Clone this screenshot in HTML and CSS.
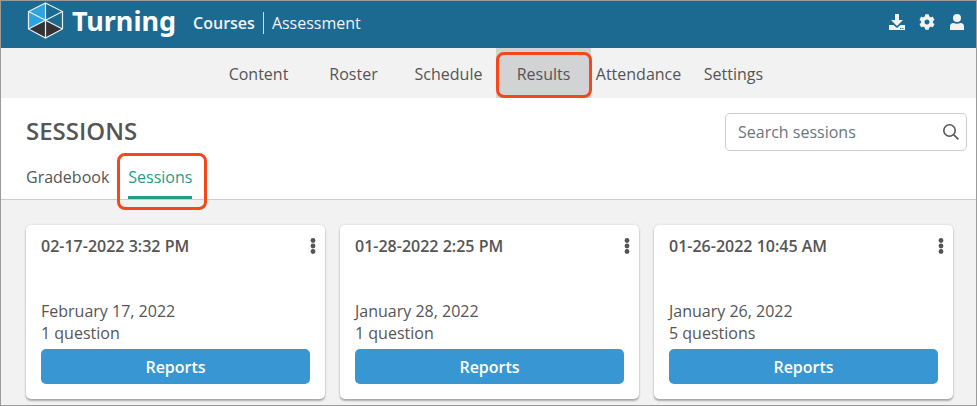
FILE: index.html
```html
<!DOCTYPE html>
<html lang="en">
<head>
  <meta charset="UTF-8" />
  <meta name="viewport" content="width=device-width, initial-scale=1.0" />
  <title>Turning - Sessions</title>
  <link rel="stylesheet" href="styles.css">
</head>
<body>
  <header class="topbar">
    <a class="brand" href="#">
      <svg class="logo" viewBox="0 0 36 37" aria-hidden="true">
        <path d="M18 1L1 9.5V27L18 18.5Z" fill="#2ea3dd"/>
        <path d="M18 18.5L1 27L18 36L35 27Z" fill="#333"/>
        <path d="M18 1L35 9.5V27L18 36L1 27V9.5ZM18 1V36M1 9.5L35 27M35 9.5L1 27" fill="none" stroke="#e8eef2" stroke-width="1.2"/>
      </svg>
      <span class="brand-name">Turning</span>
    </a>
    <nav class="modes">
      <a class="mode active" href="#">Courses</a>
      <a class="mode" href="#">Assessment</a>
    </nav>
    <div class="tools">
      <button class="tool" aria-label="Downloads">
        <svg viewBox="0 0 16 16"><path d="M6 0h4v6h4L8 12L2 6h4zM0 11h4.500l3.500 3l3.500-3H16v5H0z"/><path d="M11 14h1.200v1H11zM13.200 14h1.200v1h-1.200z" fill="#1c6a91"/></svg>
      </button>
      <button class="tool" aria-label="Settings">
        <svg viewBox="0 0 512 512"><path d="M487.400 315.700l-42.600-24.600c4.300-23.200 4.300-47 0-70.200l42.600-24.600c4.900-2.800 7.100-8.600 5.500-14-11.100-35.600-30-67.800-54.700-94.600-3.800-4.100-10-5.100-14.800-2.300L380.800 110c-17.900-15.400-38.500-27.300-60.800-35.100V25.800c0-5.600-3.900-10.500-9.400-11.700-36.700-8.200-74.300-7.800-109.200 0-5.500 1.200-9.400 6.100-9.400 11.700V75c-22.200 7.900-42.800 19.800-60.800 35.100L88.700 85.500c-4.900-2.800-11-1.900-14.800 2.300-24.700 26.700-43.600 58.900-54.700 94.600-1.700 5.400.6 11.200 5.500 14L67.300 221c-4.300 23.200-4.300 47 0 70.200l-42.600 24.600c-4.900 2.800-7.100 8.600-5.500 14 11.100 35.600 30 67.800 54.700 94.600 3.800 4.100 10 5.100 14.800 2.300l42.600-24.600c17.900 15.400 38.500 27.300 60.800 35.100v49.200c0 5.600 3.900 10.500 9.400 11.700 36.700 8.200 74.300 7.800 109.200 0 5.500-1.200 9.400-6.100 9.400-11.700v-49.200c22.200-7.900 42.800-19.800 60.800-35.100l42.600 24.600c4.900 2.800 11 1.900 14.800-2.300 24.700-26.700 43.600-58.900 54.700-94.600 1.500-5.500-.7-11.300-5.600-14.100zM256 336c-44.100 0-80-35.900-80-80s35.900-80 80-80 80 35.900 80 80-35.900 80-80 80z"/></svg>
      </button>
      <button class="tool" aria-label="Account">
        <svg viewBox="0 0 16 16"><circle cx="8" cy="4" r="4"/><path d="M1 16v-3.500Q1 9 4.500 9Q8 10.500 11.500 9Q15 9 15 12.500V16z"/></svg>
      </button>
    </div>
  </header>

  <nav class="course-nav">
    <a href="#">Content</a>
    <a href="#">Roster</a>
    <a href="#">Schedule</a>
    <a class="active" href="#">Results</a>
    <a href="#">Attendance</a>
    <a href="#">Settings</a>
  </nav>

  <section class="page-head">
    <div class="title-row">
      <h1>SESSIONS</h1>
      <div class="search">
        <input type="text" placeholder="Search sessions" aria-label="Search sessions">
        <svg viewBox="0 0 16 16" aria-hidden="true"><circle cx="6.500" cy="6.500" r="5.700"/><path d="M10.700 10.700L15.400 15.400"/></svg>
      </div>
    </div>
    <nav class="tabs">
      <a href="#">Gradebook</a>
      <a class="active" href="#">Sessions</a>
    </nav>
  </section>

  <main class="cards">
    <article class="card">
      <div class="card-head">
        <h2>02-17-2022 3:32 PM</h2>
        <button class="menu" aria-label="More options"><svg viewBox="0 0 6 16"><circle cx="3" cy="2.500" r="2.400"/><circle cx="3" cy="8" r="2.400"/><circle cx="3" cy="13.500" r="2.400"/></svg></button>
      </div>
      <p>February 17, 2022</p>
      <p>1 question</p>
      <button class="reports">Reports</button>
    </article>
    <article class="card">
      <div class="card-head">
        <h2>01-28-2022 2:25 PM</h2>
        <button class="menu" aria-label="More options"><svg viewBox="0 0 6 16"><circle cx="3" cy="2.500" r="2.400"/><circle cx="3" cy="8" r="2.400"/><circle cx="3" cy="13.500" r="2.400"/></svg></button>
      </div>
      <p>January 28, 2022</p>
      <p>1 question</p>
      <button class="reports">Reports</button>
    </article>
    <article class="card">
      <div class="card-head">
        <h2>01-26-2022 10:45 AM</h2>
        <button class="menu" aria-label="More options"><svg viewBox="0 0 6 16"><circle cx="3" cy="2.500" r="2.400"/><circle cx="3" cy="8" r="2.400"/><circle cx="3" cy="13.500" r="2.400"/></svg></button>
      </div>
      <p>January 26, 2022</p>
      <p>5 questions</p>
      <button class="reports">Reports</button>
    </article>
  </main>
</body>
</html>
```

FILE: styles.css
```css
:root {
  --header: #1c6a91;
  --bg: #f2f2f2;
  --text: #555555;
  --accent: #1f9c8a;
  --button: #3896d3;
  --highlight: #f4481c;
  --border: #cccccc;
}

* {
  box-sizing: border-box;
}

body {
  margin: 0;
  min-height: 100vh;
  border: 1px solid #9b9b9b;
  background-color: var(--bg);
  color: var(--text);
  font-family: 'Open Sans', 'Noto Sans', sans-serif;
  font-size: 16px;
  line-height: 22px;
}

a {
  color: inherit;
  text-decoration: none;
}

button {
  border: none;
  background: none;
  padding: 0;
  font: inherit;
  color: inherit;
  cursor: pointer;
}

svg {
  display: block;
}

h1, h2, p {
  margin: 0;
}

/* Top bar */
.topbar {
  display: flex;
  align-items: flex-start;
  height: 47px;
  padding: 0 11px 0 26px;
  background-color: var(--header);
  color: #f2f2f2;
}

.brand {
  display: flex;
  gap: 8px;
  padding-top: 1px;
}

.logo {
  width: 37px;
  height: 37px;
}

.brand-name {
  font-family: 'Noto Sans', sans-serif;
  font-size: 27px;
  font-weight: 700;
  line-height: 38px;
  color: #ffffff;
}

.modes {
  display: flex;
  padding-top: 11px;
  margin-left: 17px;
}

.mode + .mode {
  margin-left: 8px;
  padding-left: 8px;
  border-left: 1px solid #d0dde5;
}

.mode {
  height: 22px;
}

.mode.active {
  font-weight: 600;
}

.tools {
  display: flex;
  gap: 14px;
  margin-left: auto;
  padding-top: 13px;
}

.tool svg {
  width: 16px;
  height: 16px;
  fill: #f2f2f2;
}

/* Course navigation */
.course-nav {
  display: flex;
  justify-content: center;
  padding-left: 15px;
}

.course-nav a {
  position: relative;
  width: 95px;
  padding-top: 2px;
  line-height: 48px;
  text-align: center;
}

.course-nav .active {
  background-color: #d1d3d5;
}

.course-nav .active::after,
.tabs .active::after {
  content: "";
  position: absolute;
  border: 3px solid var(--highlight);
  border-radius: 8px;
}

.course-nav .active::after {
  inset: 4px -1px 0 0;
}

/* Page heading */
.page-head {
  padding: 15px 9px 0 25px;
  background-color: #ffffff;
  border-bottom: 1px solid var(--border);
}

.title-row {
  display: flex;
  justify-content: space-between;
  align-items: flex-start;
}

h1 {
  font-size: 24px;
  font-weight: 600;
  line-height: 36px;
}

.search {
  display: flex;
  align-items: center;
  width: 242px;
  height: 38px;
  padding: 0 7px 0 12px;
  border: 1px solid var(--border);
  border-radius: 5px;
}

.search input {
  flex: 1;
  min-width: 0;
  padding: 0;
  border: none;
  outline: none;
  font: inherit;
  color: var(--text);
}

.search input::placeholder {
  color: #6c757d;
  opacity: 1;
}

.search svg {
  width: 16px;
  height: 16px;
  fill: none;
  stroke: var(--text);
  stroke-width: 1.6;
}

.tabs {
  display: flex;
  gap: 19px;
  padding-top: 15px;
}

.tabs a {
  position: relative;
  height: 33px;
  border-bottom: 3px solid transparent;
}

.tabs .active {
  color: var(--accent);
  border-color: var(--accent);
}

.tabs .active::after {
  inset: -13px -15px -14px -11px;
}

/* Session cards */
.cards {
  display: grid;
  grid-template-columns: repeat(3, 1fr);
  gap: 15px;
  padding: 25px 23px 5px 25px;
}

.card {
  padding: 10px 15px 15px;
  background-color: #ffffff;
  border-radius: 5px;
  box-shadow: 0 2px 2px rgba(0,0,0,0.28), 0 0 3px rgba(0,0,0,0.12);
}

.card-head {
  display: flex;
  justify-content: space-between;
  align-items: center;
  margin: 0 -6px 43px 0;
}

h2 {
  font-size: 16px;
  font-weight: 600;
  line-height: 22px;
}

.menu svg {
  width: 6px;
  height: 16px;
  fill: var(--text);
}

.reports {
  width: 100%;
  height: 35px;
  margin-top: 5px;
  border-radius: 5px;
  background-color: var(--button);
  color: #ffffff;
  font-weight: 600;
}
```
